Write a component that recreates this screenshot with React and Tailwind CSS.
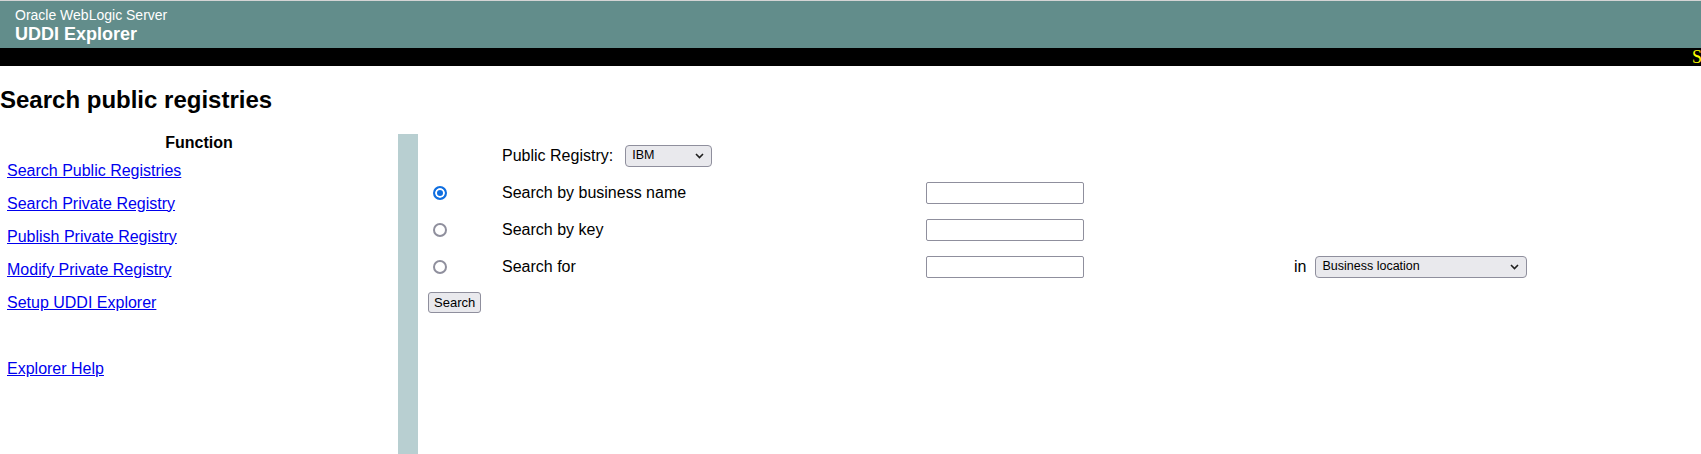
import { useState } from 'react'

const FUNCTIONS = [
  'Search Public Registries',
  'Search Private Registry',
  'Publish Private Registry',
  'Modify Private Registry',
  'Setup UDDI Explorer',
]

function Chevron() {
  return (
    <svg className="w-[9px] h-[6px]" viewBox="0 0 9 6" fill="none" stroke="#1f1f1f" strokeWidth={1.6}>
      <path d="M1 1l3.5 3.5L8 1" />
    </svg>
  )
}

function Select({ width, value, options }) {
  return (
    <div className={`relative ${width} h-[22px]`}>
      <select
        defaultValue={value}
        className="appearance-none w-full h-full bg-[#e9e9ed] border border-[#8f8f9d] rounded-[4px] pl-[6px] pr-[20px] text-[12.5px] text-black leading-none outline-none"
      >
        {options.map((o) => (
          <option key={o}>{o}</option>
        ))}
      </select>
      <span className="pointer-events-none absolute right-[8px] top-1/2 -translate-y-1/2 flex">
        <Chevron />
      </span>
    </div>
  )
}

function TextBox() {
  return <input type="text" className="w-[158px] h-[22px] border border-[#8f8f9d] rounded-[2px] bg-white px-1 text-[13px] outline-none" />
}

export default function App() {
  const [mode, setMode] = useState('name')

  const rows = [
    { id: 'name', label: 'Search by business name' },
    { id: 'key', label: 'Search by key' },
    { id: 'for', label: 'Search for' },
  ]

  return (
    <div className="min-h-screen flex flex-col bg-white text-black font-['Liberation_Sans',Arial,sans-serif]">
      {/* Banner */}
      <div className="border-t border-[#d4d4d4] bg-[#628d8b] pl-[15px] pt-[6px] pb-[4px] text-white">
        <div className="text-[14px] leading-[16px]">Oracle WebLogic Server</div>
        <div className="mt-[1px] text-[18px] leading-[20px] font-bold">UDDI Explorer</div>
      </div>
      <div className="h-[18px] bg-black overflow-hidden whitespace-nowrap pl-[1692px] text-[18px] leading-[18px] text-[#ffff00] font-['Liberation_Serif',serif]">
        Search public registries
      </div>

      <h2 className="mt-[20px] mb-[20px] text-[24px] leading-[28px] font-bold">Search public registries</h2>

      <div className="flex flex-1">
        {/* Function column */}
        <div className="w-[398px] flex-shrink-0">
          <div className="h-[20px] text-center text-[16px] leading-[18px] font-bold">Function</div>
          {FUNCTIONS.map((f) => (
            <div key={f} className="h-[33px] flex items-center pl-[7px]">
              <a href="#" className="text-[16px] leading-[18px] text-[#0000ee] underline">{f}</a>
            </div>
          ))}
          <div className="h-[33px]" />
          <div className="h-[33px] flex items-center pl-[7px]">
            <a href="#" className="text-[16px] leading-[18px] text-[#0000ee] underline">Explorer Help</a>
          </div>
        </div>

        <div className="w-[20px] flex-shrink-0 bg-[#b8cfd1]" />

        {/* Search form */}
        <div className="flex-1 pt-[3px] text-[16px] leading-[18px]">
          <div className="h-[37px] flex items-center">
            <div className="w-[84px]" />
            <span>Public Registry:</span>
            <div className="ml-[12px]">
              <Select width="w-[87px]" value="IBM" options={['IBM', 'Microsoft', 'SAP', 'XMethods']} />
            </div>
          </div>

          {rows.map((r) => (
            <div key={r.id} className="h-[37px] flex items-center">
              <div className="w-[84px] pl-[15px] flex items-center">
                <input
                  type="radio"
                  name="mode"
                  checked={mode === r.id}
                  onChange={() => setMode(r.id)}
                  className="appearance-none m-0 w-[14px] h-[14px] rounded-full border-2 border-[#8f8f9d] bg-white checked:border-[#0f6ee0] checked:bg-[#0f6ee0] checked:shadow-[inset_0_0_0_2px_white]"
                />
              </div>
              <div className="w-[424px]">{r.label}</div>
              <div className="w-[368px]">
                <TextBox />
              </div>
              {r.id === 'for' && (
                <div className="flex items-center gap-[9px]">
                  <span>in</span>
                  <Select
                    width="w-[212px]"
                    value="Business location"
                    options={['Business location', 'Business category', 'Service type']}
                  />
                </div>
              )}
            </div>
          ))}

          <div className="mt-[7px] pl-[10px]">
            <button className="h-[21px] px-[5px] bg-[#e9e9ed] border border-[#8f8f9d] rounded-[3px] text-[13px] leading-none">
              Search
            </button>
          </div>
        </div>
      </div>
    </div>
  )
}
